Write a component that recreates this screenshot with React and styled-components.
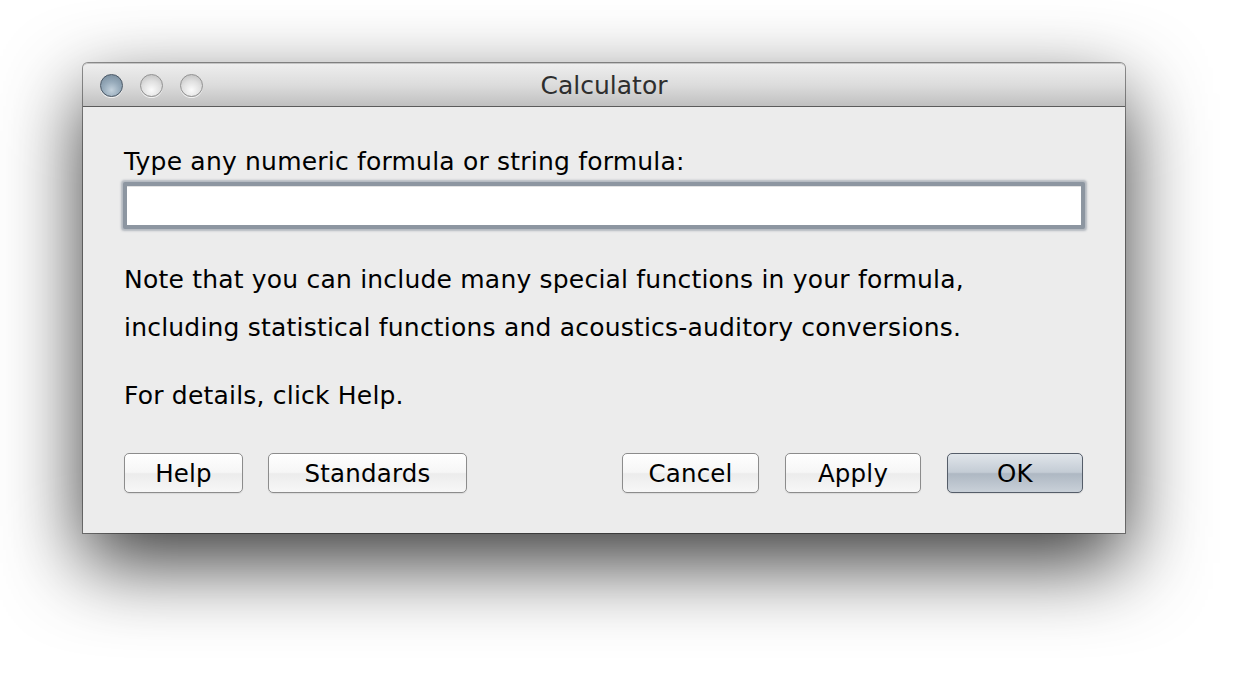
import React from "react";
import styled, { createGlobalStyle } from "styled-components";

const Global = createGlobalStyle`
  html, body { margin: 0; padding: 0; background: #ffffff; }
  body { font-family: "DejaVu Sans", "Liberation Sans", sans-serif; }
  * { box-sizing: border-box; }
`;

const Page = styled.div`
  width: 1234px;
  height: 678px;
  padding: 63px 0 0 83px;
  overflow: hidden;
`;

const Window = styled.div`
  width: 1042px;
  height: 470px;
  display: flex;
  flex-direction: column;
  border-radius: 5px 5px 0 0;
  box-shadow: 0 30px 80px rgba(0, 0, 0, 0.78), 0 0 0 1px rgba(0, 0, 0, 0.4);
  background: #ececec;
`;

const TitleBar = styled.div`
  height: 44px;
  flex: none;
  display: flex;
  align-items: center;
  position: relative;
  padding-left: 17px;
  border-radius: 5px 5px 0 0;
  border-top: 1px solid #c4c4c4;
  border-bottom: 1px solid #5b5b5b;
  background: linear-gradient(#eeeeee, #dcdcdc 50%, #c0c0c0);
`;

const Lights = styled.div`
  display: flex;
  gap: 17px;
`;

const Light = styled.div`
  width: 23px;
  height: 23px;
  border-radius: 50%;
  border: 1.5px solid ${(p) => (p.$active ? "#4a5866" : "#929292")};
  background: ${(p) =>
    p.$active
      ? "radial-gradient(circle at 50% 72%, #c3d1dc 0%, #97abbb 45%, #728697 100%)"
      : "radial-gradient(circle at 50% 72%, #fbfbfb 0%, #e0e0e0 50%, #b8b8b8 100%)"};
  box-shadow: 0 1px 0 rgba(255, 255, 255, 0.7);
`;

const Title = styled.div`
  position: absolute;
  left: 0;
  right: 0;
  top: 1px;
  bottom: 0;
  display: flex;
  align-items: center;
  justify-content: center;
  font-size: 25px;
  color: #2e2e2e;
  pointer-events: none;
`;

const Content = styled.div`
  flex: 1;
  display: flex;
  flex-direction: column;
  padding: 0 40px 0 41px;
  color: #000;
  font-size: 25px;
  letter-spacing: 0.2px;
`;

const Label = styled.div`
  margin-top: 43px;
  line-height: 24px;
`;

const Field = styled.input`
  margin: 8px 0 0 -1px;
  width: 962px;
  height: 47px;
  border: 4px solid #8d96a1;
  border-radius: 2px;
  background: #fff;
  box-shadow: 0 0 2px 1.5px rgba(141, 150, 161, 0.6), inset 0 1px 0 #e2e2e2;
  outline: none;
  font: inherit;
`;

const Para = styled.p`
  margin: ${(p) => p.$top}px 0 0 0;
  line-height: 48px;
`;

const ButtonRow = styled.div`
  display: flex;
  align-items: center;
  margin-top: 33px;
  padding-right: 2px;
`;

const Group = styled.div`
  display: flex;
  gap: ${(p) => (p.$right ? 26 : 25)}px;
  margin-left: ${(p) => (p.$right ? "auto" : "0")};
`;

const Button = styled.button`
  width: ${(p) => p.$w}px;
  height: 40px;
  border-radius: 5px;
  border: 1px solid ${(p) => (p.$default ? "#555d69" : "#8c8c8c")};
  background: ${(p) =>
    p.$default
      ? "linear-gradient(#e0e5ea, #c4ccd5 48%, #aeb8c3 52%, #c9d0d8)"
      : "linear-gradient(#ffffff, #f6f6f6 48%, #ececec 52%, #f7f7f7)"};
  box-shadow: 0 1px 1px rgba(0, 0, 0, 0.08);
  font-family: inherit;
  font-size: 24.5px;
  letter-spacing: 0.2px;
  color: #000;
  padding: 0;
`;

export default function App() {
  return (
    <>
      <Global />
      <Page>
        <Window>
          <TitleBar>
            <Lights>
              <Light $active />
              <Light />
              <Light />
            </Lights>
            <Title>Calculator</Title>
          </TitleBar>
          <Content>
            <Label>Type any numeric formula or string formula:</Label>
            <Field />
            <Para $top={27}>
              Note that you can include many special functions in your formula,
              <br />
              including statistical functions and acoustics-auditory conversions.
            </Para>
            <Para $top={20}>For details, click Help.</Para>
            <ButtonRow>
              <Group>
                <Button $w={119}>Help</Button>
                <Button $w={199}>Standards</Button>
              </Group>
              <Group $right>
                <Button $w={137}>Cancel</Button>
                <Button $w={136}>Apply</Button>
                <Button $w={136} $default>OK</Button>
              </Group>
            </ButtonRow>
          </Content>
        </Window>
      </Page>
    </>
  );
}
